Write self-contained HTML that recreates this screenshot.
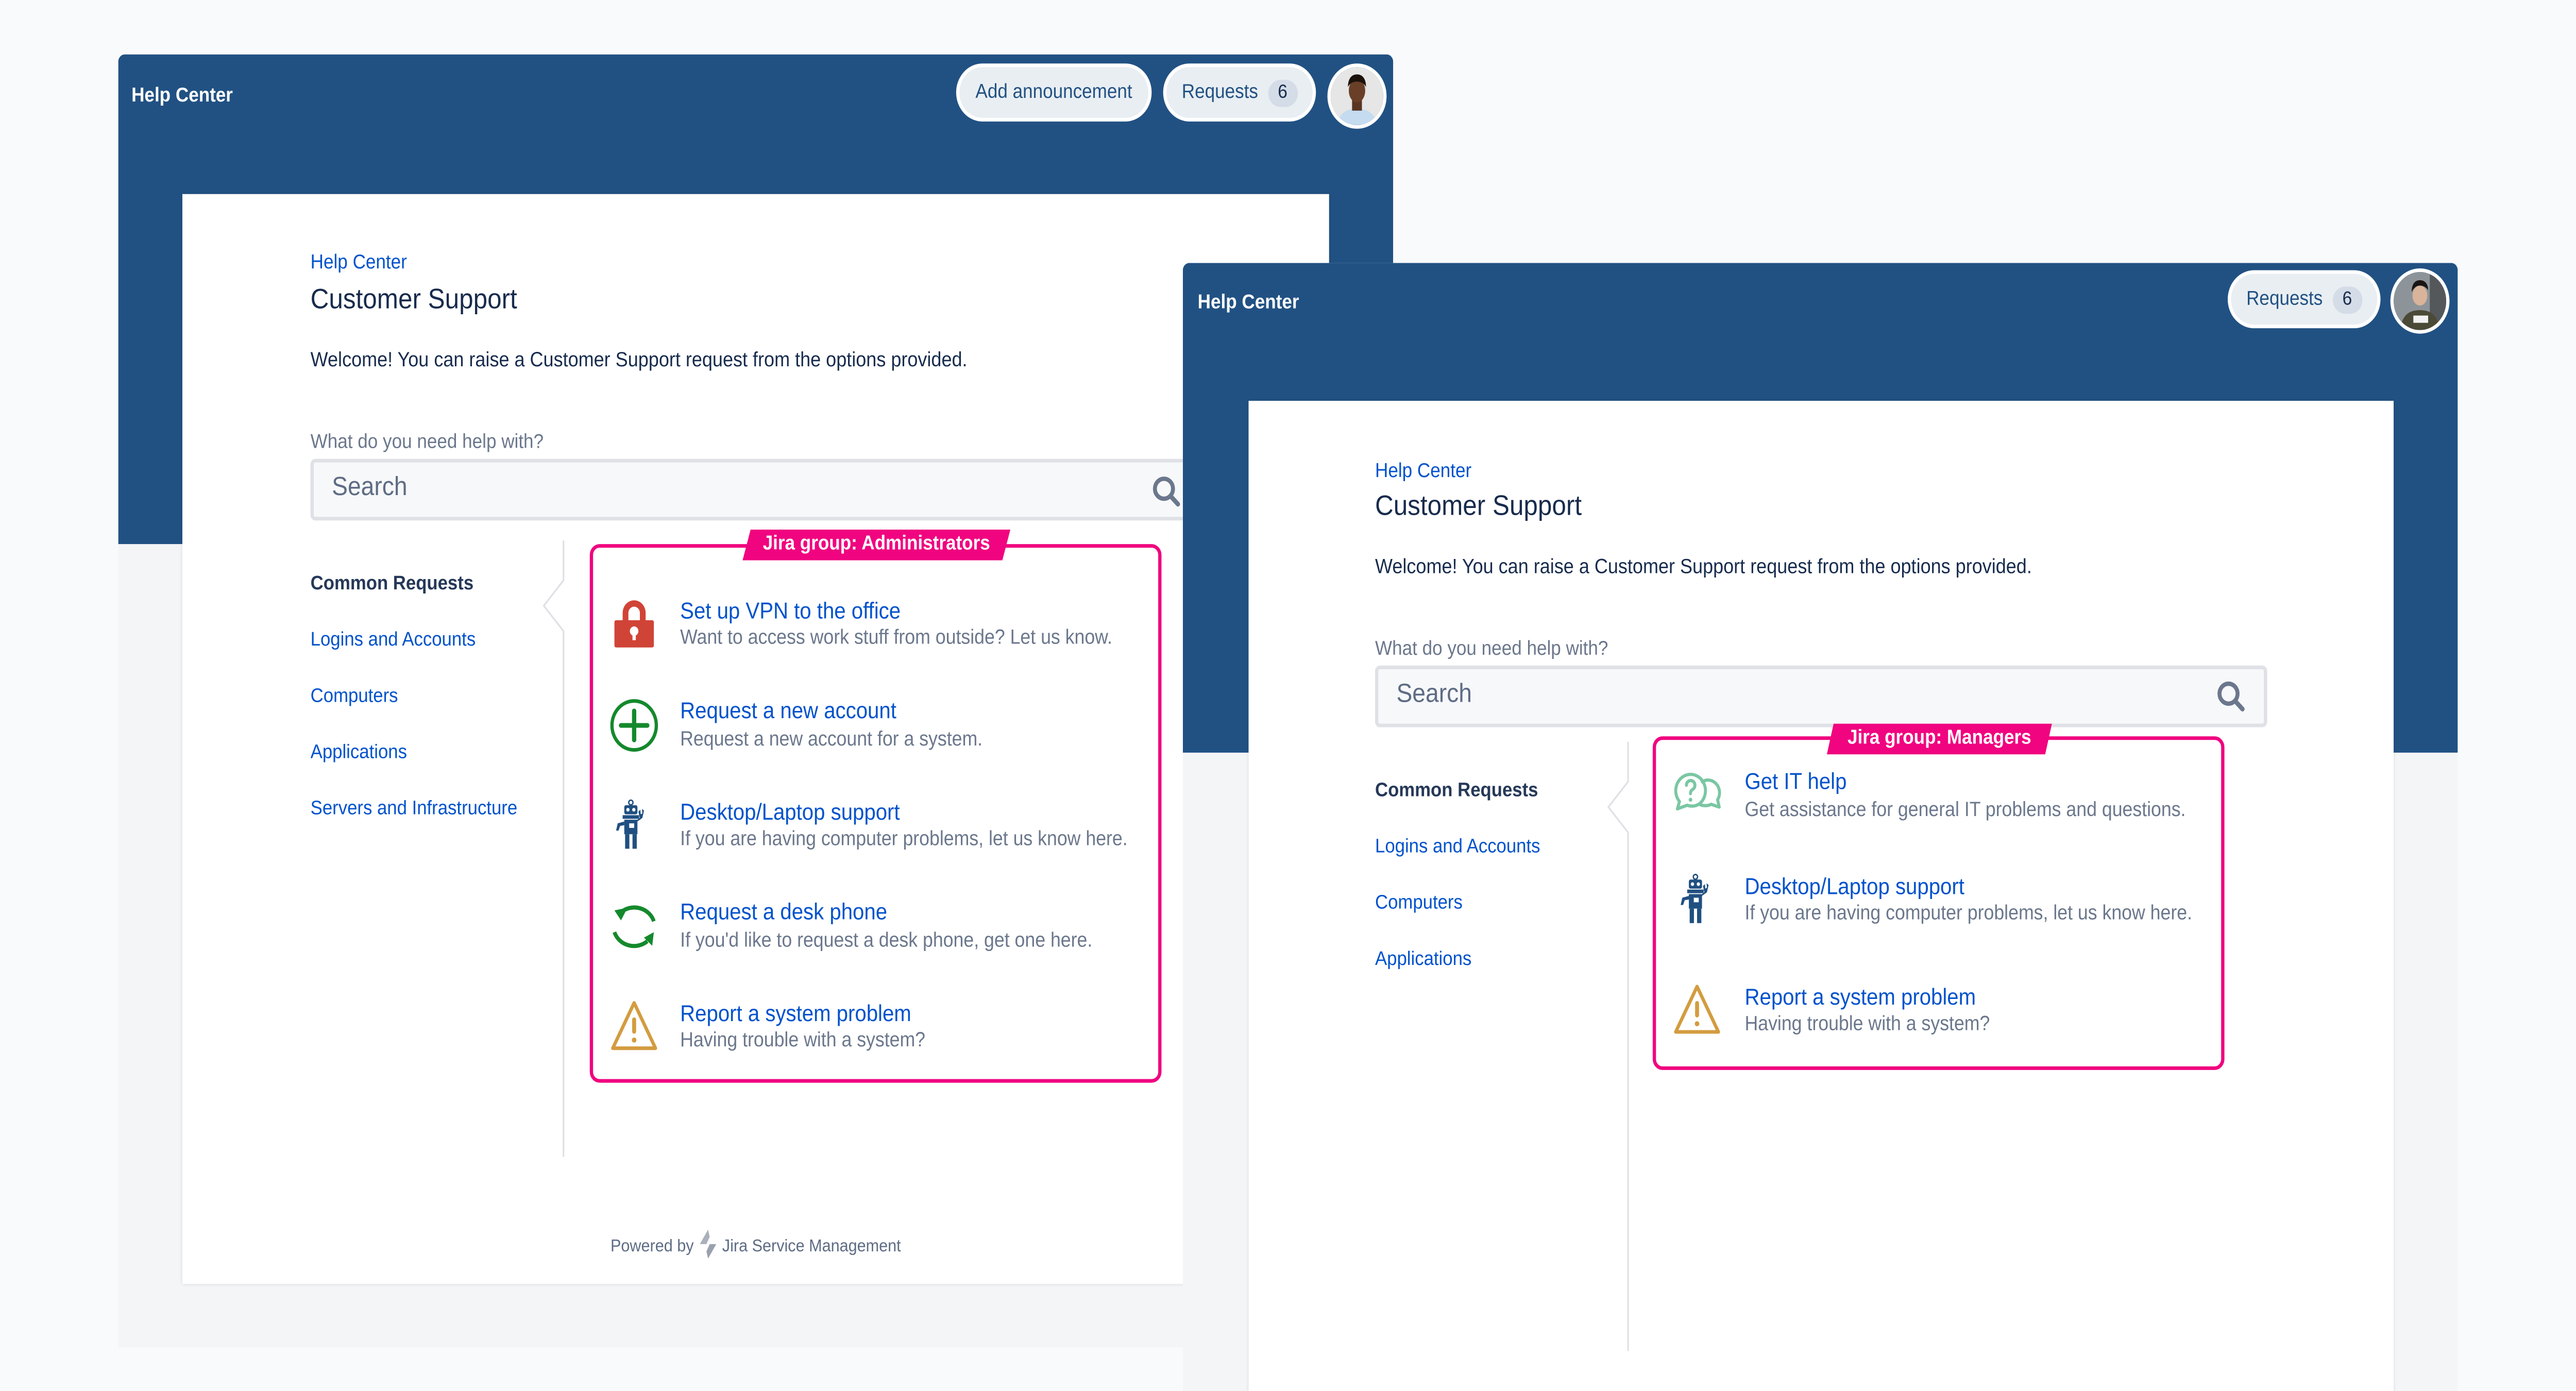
<!DOCTYPE html>
<html><head><meta charset="utf-8">
<style>
html,body{margin:0;padding:0;width:100%;height:100%;overflow:hidden;background:#f9fafc;}
#wrap{position:fixed;left:0;top:0;width:100vw;height:100vh;overflow:hidden;}
#s{position:absolute;left:0;top:0;width:1568px;height:767px;overflow:hidden;transform:scale(3.1888,3.5204);transform-origin:0 0;font-family:"Liberation Sans",sans-serif;}
.a{position:absolute;white-space:nowrap;}
.win{position:absolute;background:#f4f5f7;border-radius:4px 4px 0 0;overflow:hidden;}
.hdr{position:absolute;left:0;top:0;right:0;height:270px;background:#215183;}
.hc{position:absolute;color:#fff;font-size:11px;font-weight:bold;}
.pill{position:absolute;height:28px;border:2px solid #fff;border-radius:16px;background:#e9eef2;color:#215183;font-size:11px;line-height:28px;box-sizing:content-box;}
.badge{display:inline-block;background:#d4dce7;color:#172b4d;border-radius:8px;padding:0 6px;line-height:15px;font-size:10.5px;margin-left:6px;}
.av{position:absolute;width:32px;height:32px;border-radius:50%;border:2px solid #fff;overflow:hidden;}
.card{position:absolute;background:#fff;box-shadow:0 0 2px rgba(0,0,0,.12);}
.bc{color:#0052cc;font-size:11px;}
.tt{color:#172b4d;font-size:15.5px;}
.wl{color:#172b4d;font-size:11.3px;}
.lb{color:#6b778c;font-size:11px;}
.srch{position:absolute;height:30px;background:#f7f8fa;border:2px solid #dfe1e6;border-radius:3px;}
.srch span{position:absolute;left:11px;top:6px;font-size:14.5px;color:#5e6c84;}
.nav{font-size:10.9px;color:#0052cc;}
.navb{font-size:10.9px;color:#253858;font-weight:bold;}
.box{position:absolute;border:2px solid #f0047f;border-radius:6px;}
.tag{position:absolute;height:17px;background:#f0047f;clip-path:polygon(3% 0,100% 0,97% 100%,0 100%);color:#fff;font-weight:bold;font-size:11px;line-height:17px;text-align:center;}
.it{color:#0052cc;font-size:12.6px;}
.ds{color:#6b778c;font-size:11.2px;}
.ic{position:absolute;width:32px;height:32px;}
</style></head><body>
<svg width="0" height="0" style="position:absolute">
<defs>
<symbol id="lock" viewBox="0 0 32 32"><path d="M9 15V10a7 7 0 0 1 14 0v5h-3.5v-5a3.5 3.5 0 0 0-7 0v5z" fill="#d04437"/><rect x="4" y="14" width="24" height="15" rx="1" fill="#d04437"/><circle cx="16" cy="20" r="2.6" fill="#fff"/><rect x="15" y="20" width="2" height="5" fill="#fff"/></symbol>
<symbol id="plus" viewBox="0 0 32 32"><circle cx="16" cy="16" r="13.5" fill="none" stroke="#14892c" stroke-width="2"/><path d="M16 8v16M8 16h16" stroke="#14892c" stroke-width="2.6" stroke-linecap="round"/></symbol>
<symbol id="robot" viewBox="0 0 32 32"><g fill="#205081"><circle cx="14" cy="3.5" r="1.3" fill="none" stroke="#205081" stroke-width=".8"/><rect x="10" y="5" width="8" height="5" rx="1"/><rect x="9" y="10.5" width="10" height="2"/><rect x="10" y="13" width="8" height="8"/><rect x="10.5" y="21" width="2.6" height="8"/><rect x="15" y="21" width="2.6" height="8"/><path d="M10 14l-4 1-1 4 1.5 0 1-2.6 2.5-.4zM18 14l3-2 1-4-1.2-1 .2 2.5-1 .5-.2-2.5-1.2 1 .8 3.5-1.4 1z"/></g><rect x="13" y="15" width="3" height="2.5" fill="#fff"/><circle cx="12.2" cy="7.5" r="1" fill="#fff"/><circle cx="15.8" cy="7.5" r="1" fill="#fff"/></symbol>
<symbol id="sync" viewBox="0 0 32 32"><path d="M28 13A12.5 11 0 0 0 8 8" fill="none" stroke="#14892c" stroke-width="2.3"/><path d="M4 7l8-1.5-4 7z" fill="#14892c"/><path d="M4 19A12.5 11 0 0 0 24 24" fill="none" stroke="#14892c" stroke-width="2.3"/><path d="M28 19l-1 7.5-5-4.5z" fill="#14892c"/></symbol>
<symbol id="warn" viewBox="0 0 32 32"><path d="M16 3L3 28h26z" fill="none" stroke="#d39c3f" stroke-width="2" stroke-linejoin="round"/><rect x="14.8" y="11" width="2.4" height="9" rx="1.2" fill="#d39c3f"/><circle cx="16" cy="23.5" r="1.4" fill="#d39c3f"/></symbol>
<symbol id="chat" viewBox="0 0 32 32"><g fill="none" stroke="#79c7a3" stroke-width="1.8" stroke-linejoin="round"><path d="M12 5a9 9 0 0 1 6 15.8c-2 1.6-5 2.2-8 1.2L4 24l1.3-4A9 9 0 0 1 12 5z"/><path d="M18.5 9.5a7 7 0 0 1 10 9.5L29.5 23l-5-1.5c-2 1-5 1-7 0"/></g><path d="M9.5 11a2.6 2.6 0 1 1 3.8 2.3c-1 .6-1.3 1.2-1.3 2.3" fill="none" stroke="#79c7a3" stroke-width="1.8" stroke-linecap="round"/><circle cx="12" cy="19" r="1.1" fill="#79c7a3"/></symbol>
<symbol id="face1" viewBox="0 0 32 32"><rect width="32" height="32" fill="#e6e6e6"/><path d="M4 32c1-7 6-9 12-9s11 2 12 9z" fill="#c5dbef"/><rect x="13" y="18" width="6" height="6" fill="#5a3522"/><ellipse cx="16" cy="13" rx="5" ry="6.5" fill="#6a3f27"/><path d="M10.5 11c0-5 2.5-7 5.5-7s5.5 2 5.5 7c-1-2-3-3-5.5-3s-4.5 1-5.5 3z" fill="#1b120c"/></symbol>
<symbol id="face2" viewBox="0 0 32 32"><rect width="32" height="32" fill="#8d9499"/><rect x="22" y="0" width="10" height="32" fill="#55585b"/><path d="M4 32c1-8 5-11 12-11s11 3 12 11z" fill="#4b4a36"/><ellipse cx="16" cy="13" rx="4.5" ry="5.5" fill="#d9b49a"/><path d="M11 11c0-5 2.5-6.5 5-6.5s5 1.5 5 5.5c-1-1.5-3-2.5-5-2.5s-3.5 1-5 3.5z" fill="#1a1513"/><rect x="12" y="24" width="9" height="4" fill="#f2f2f2"/></symbol>
</defs></svg>
<div id="wrap"><div id="s">

<div class="win" style="left:72px;top:30px;width:776px;height:713px;">
 <div class="hdr"></div>
 <div class="hc" style="left:8px;top:17px;">Help Center</div>
 <div class="pill" style="left:510px;top:5px;width:115px;text-align:center;">Add announcement</div>
 <div class="pill" style="left:636px;top:5px;width:89px;text-align:center;">Requests<span class="badge">6</span></div>
 <div class="av" style="left:736px;top:5px;"><svg width="32" height="32"><use href="#face1"/></svg></div>
 <div class="card" style="left:39px;top:77px;width:698px;height:601px;">
  <div class="a bc" style="left:78px;top:32px;">Help Center</div>
  <div class="a tt" style="left:78px;top:50px;">Customer Support</div>
  <div class="a wl" style="left:78px;top:86px;">Welcome! You can raise a Customer Support request from the options provided.</div>
  <div class="a lb" style="left:78px;top:131px;">What do you need help with?</div>
  <div class="srch" style="left:78px;top:146px;width:620px;"><span>Search</span>
   <svg style="position:absolute;left:510px;top:7px" width="18" height="18" viewBox="0 0 18 18"><circle cx="7.5" cy="7.5" r="5.5" fill="none" stroke="#6b778c" stroke-width="2.4"/><path d="M11.5 11.5l4.5 4.5" stroke="#6b778c" stroke-width="2.6" stroke-linecap="round"/></svg></div>
  <div class="a navb" style="left:78px;top:209px;">Common Requests</div>
  <div class="a nav" style="left:78px;top:240px;">Logins and Accounts</div>
  <div class="a nav" style="left:78px;top:271px;">Computers</div>
  <div class="a nav" style="left:78px;top:302px;">Applications</div>
  <div class="a nav" style="left:78px;top:333px;">Servers and Infrastructure</div>
  <svg class="a" style="left:215px;top:191px" width="20" height="340"><path d="M17 0V22L5 36L17 50V340" fill="none" stroke="#dfe1e6" stroke-width="1"/></svg>
 </div>
 <div class="a" style="left:0;top:648px;width:776px;text-align:center;font-size:9.6px;color:#5e6c84;">Powered by <svg width="12" height="16" viewBox="0 0 12 16" style="vertical-align:-4px"><path d="M6 0L1 8h4l2-4z" fill="#aab0bc"/><path d="M6 16l5-8H7l-2 4z" fill="#9aa1ae"/></svg> Jira Service Management</div>
</div>
<div class="box" style="left:359px;top:300px;width:344px;height:293px;"></div>
<div class="tag" style="left:452px;top:292px;width:163px;">Jira group: Administrators</div>
<svg class="ic" style="left:370px;top:328px"><use href="#lock"/></svg>
<div class="a it" style="left:414px;top:330px;">Set up VPN to the office</div>
<div class="a ds" style="left:414px;top:346px;">Want to access work stuff from outside? Let us know.</div>
<svg class="ic" style="left:370px;top:384px"><use href="#plus"/></svg>
<div class="a it" style="left:414px;top:385px;">Request a new account</div>
<div class="a ds" style="left:414px;top:402px;">Request a new account for a system.</div>
<svg class="ic" style="left:370px;top:439px"><use href="#robot"/></svg>
<div class="a it" style="left:414px;top:441px;">Desktop/Laptop support</div>
<div class="a ds" style="left:414px;top:457px;">If you are having computer problems, let us know here.</div>
<svg class="ic" style="left:370px;top:495px"><use href="#sync"/></svg>
<div class="a it" style="left:414px;top:496px;">Request a desk phone</div>
<div class="a ds" style="left:414px;top:513px;">If you'd like to request a desk phone, get one here.</div>
<svg class="ic" style="left:370px;top:550px"><use href="#warn"/></svg>
<div class="a it" style="left:414px;top:552px;">Report a system problem</div>
<div class="a ds" style="left:414px;top:568px;">Having trouble with a system?</div>

<div class="win" style="left:720px;top:145px;width:776px;height:640px;">
 <div class="hdr"></div>
 <div class="hc" style="left:9px;top:16px;">Help Center</div>
 <div class="pill" style="left:636px;top:4px;width:89px;text-align:center;">Requests<span class="badge">6</span></div>
 <div class="av" style="left:735px;top:3px;"><svg width="32" height="32"><use href="#face2"/></svg></div>
 <div class="card" style="left:40px;top:76px;width:697px;height:600px;">
  <div class="a bc" style="left:77px;top:33px;">Help Center</div>
  <div class="a tt" style="left:77px;top:50px;">Customer Support</div>
  <div class="a wl" style="left:77px;top:86px;">Welcome! You can raise a Customer Support request from the options provided.</div>
  <div class="a lb" style="left:77px;top:131px;">What do you need help with?</div>
  <div class="srch" style="left:77px;top:146px;width:539px;"><span>Search</span>
   <svg style="position:absolute;left:510px;top:6px" width="18" height="18" viewBox="0 0 18 18"><circle cx="7.5" cy="7.5" r="5.5" fill="none" stroke="#6b778c" stroke-width="2.4"/><path d="M11.5 11.5l4.5 4.5" stroke="#6b778c" stroke-width="2.6" stroke-linecap="round"/></svg></div>
  <div class="a navb" style="left:77px;top:209px;">Common Requests</div>
  <div class="a nav" style="left:77px;top:240px;">Logins and Accounts</div>
  <div class="a nav" style="left:77px;top:271px;">Computers</div>
  <div class="a nav" style="left:77px;top:302px;">Applications</div>
  <svg class="a" style="left:214px;top:188px" width="20" height="340"><path d="M17 0V22L5 36L17 50V336" fill="none" stroke="#dfe1e6" stroke-width="1"/></svg>
 </div>
</div>
<div class="box" style="left:1006px;top:406px;width:344px;height:180px;"></div>
<div class="tag" style="left:1112px;top:399px;width:137px;">Jira group: Managers</div>
<svg class="ic" style="left:1017px;top:422px"><use href="#chat"/></svg>
<div class="a it" style="left:1062px;top:424px;">Get IT help</div>
<div class="a ds" style="left:1062px;top:441px;">Get assistance for general IT problems and questions.</div>
<svg class="ic" style="left:1018px;top:480px"><use href="#robot"/></svg>
<div class="a it" style="left:1062px;top:482px;">Desktop/Laptop support</div>
<div class="a ds" style="left:1062px;top:498px;">If you are having computer problems, let us know here.</div>
<svg class="ic" style="left:1017px;top:541px"><use href="#warn"/></svg>
<div class="a it" style="left:1062px;top:543px;">Report a system problem</div>
<div class="a ds" style="left:1062px;top:559px;">Having trouble with a system?</div>

</div></div>
<script>
(function(){
 var w=window.innerWidth||document.documentElement.clientWidth||5000;
 var h=window.innerHeight||document.documentElement.clientHeight||2700;
 document.getElementById('s').style.transform='scale('+(w/1568)+','+(h/767)+')';
})();
</script>
</body></html>
